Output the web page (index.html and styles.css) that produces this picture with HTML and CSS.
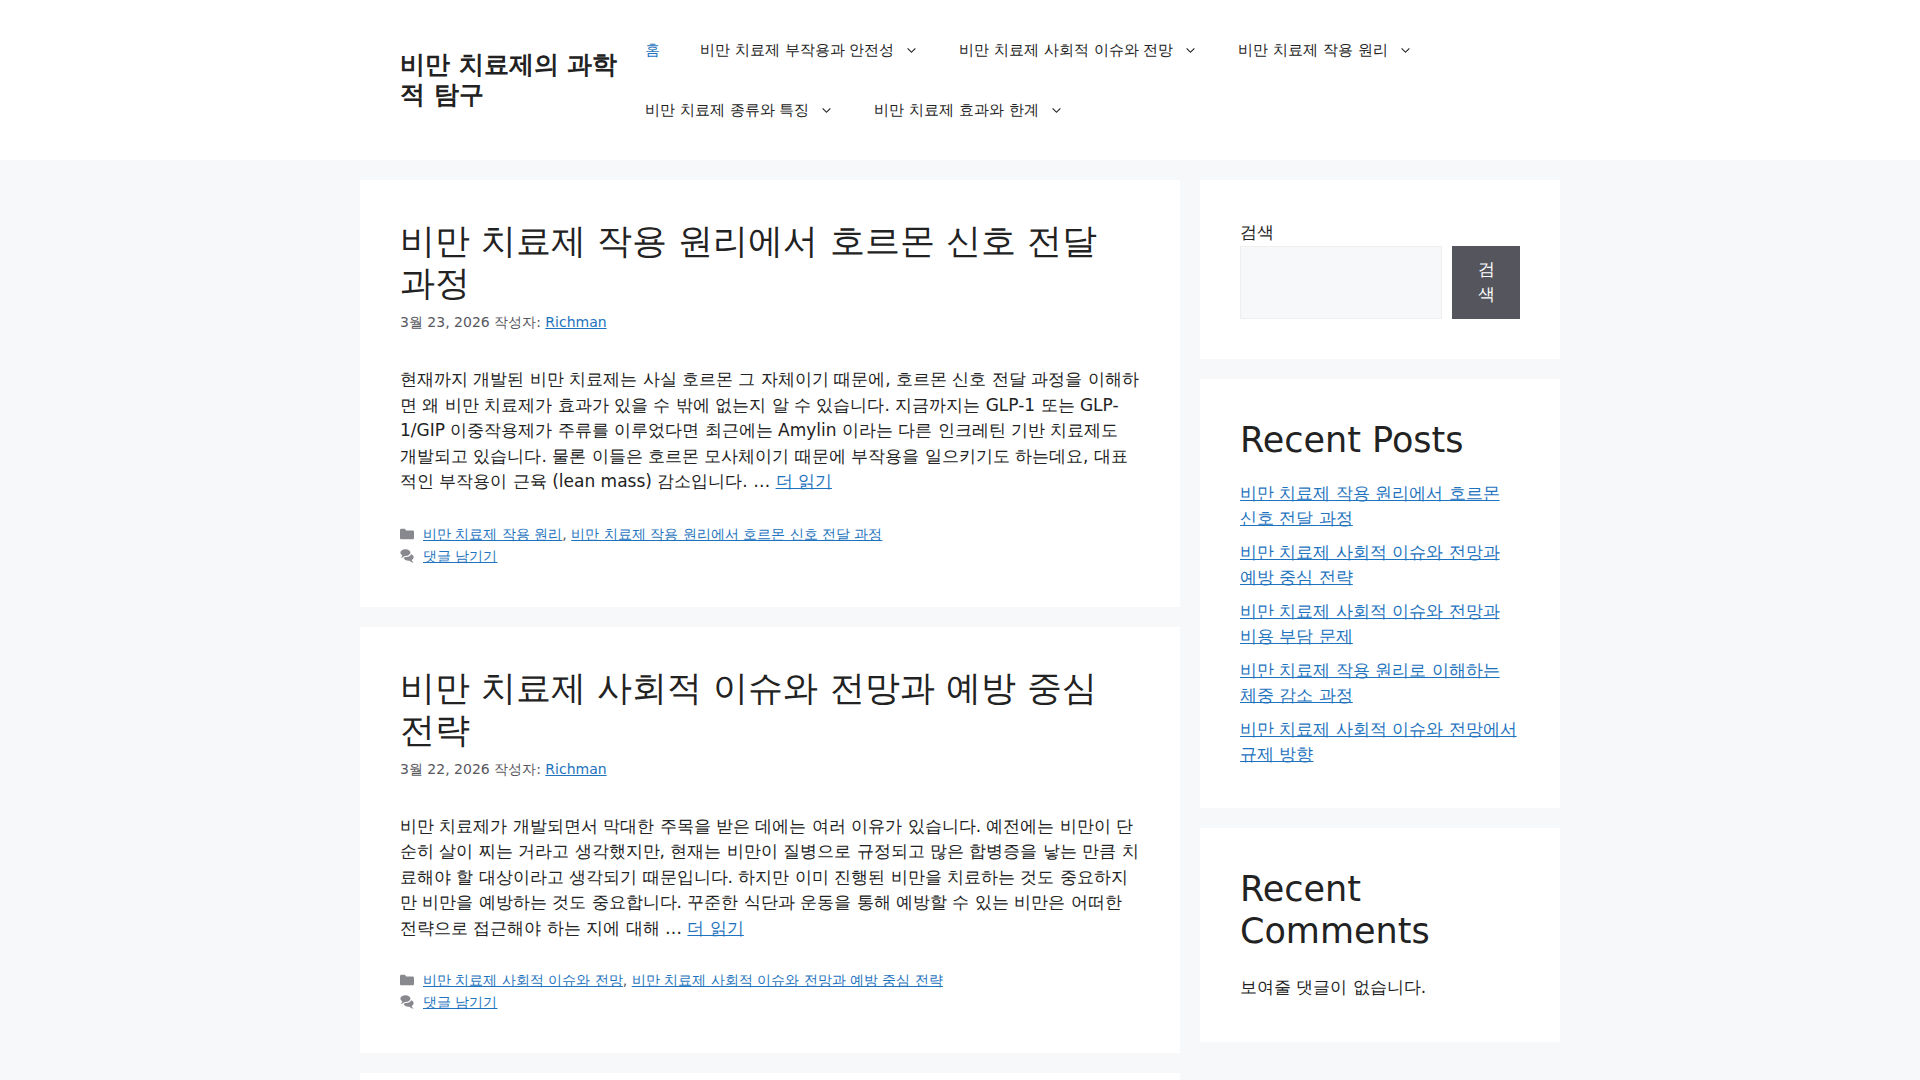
FILE: index.html
```html
<!DOCTYPE html>
<html lang="ko-KR">
<head>
  <meta charset="UTF-8">
  <meta name="viewport" content="width=device-width, initial-scale=1.0">
  <title>비만 치료제의 과학적 탐구</title>
  <link rel="stylesheet" href="styles.css">
</head>
<body>

  <!-- shared icons -->
  <svg class="icon-defs" aria-hidden="true">
    <symbol id="icon-arrow" viewBox="0 0 330 512">
      <path d="M305.913 197.085c0 2.266-1.133 4.815-2.833 6.514L171.087 335.593c-1.7 1.7-4.249 2.832-6.515 2.832s-4.815-1.133-6.515-2.832L26.064 203.599c-1.7-1.7-2.832-4.248-2.832-6.514s1.132-4.816 2.832-6.515l14.162-14.163c1.7-1.699 3.966-2.832 6.515-2.832 2.266 0 4.815 1.133 6.515 2.832l111.316 111.317 111.316-111.317c1.7-1.699 4.249-2.832 6.515-2.832s4.815 1.133 6.515 2.832l14.162 14.163c1.7 1.7 2.833 4.249 2.833 6.515z"/>
    </symbol>
    <symbol id="icon-folder" viewBox="0 0 512 512">
      <path d="M0 112c0-26.51 21.49-48 48-48h110.014a48 48 0 0143.592 27.907l12.349 26.791A16 16 0 00228.486 128H464c26.51 0 48 21.49 48 48v224c0 26.51-21.49 48-48 48H48c-26.51 0-48-21.49-48-48V112z"/>
    </symbol>
    <symbol id="icon-comments" viewBox="0 0 512 512">
      <path d="M132.838 329.973a435.298 435.298 0 0016.769-9.004c13.363-7.574 26.587-16.142 37.419-25.507 7.544.597 15.27.925 23.098.925 54.905 0 105.634-15.311 143.285-41.28 23.728-16.365 43.115-37.692 54.155-62.645 54.739 22.205 91.498 63.272 91.498 110.286 0 42.186-29.558 79.498-75.09 102.828 23.46 49.216 75.09 101.709 75.09 101.709s-115.837-38.35-154.424-78.46c-9.956 1.12-20.297 1.758-30.793 1.758-88.727 0-162.927-43.071-181.007-100.61z"/>
      <path d="M383.371 132.502c0 70.603-82.961 127.787-185.216 127.787-10.496 0-20.837-.639-30.793-1.757-38.587 40.093-154.424 78.42-154.424 78.42s51.63-52.472 75.09-101.67c-45.532-23.321-75.09-60.619-75.09-102.79C12.938 61.9 95.9 4.716 198.155 4.716 300.41 4.715 383.37 61.9 383.37 132.502z"/>
    </symbol>
  </svg>

  <header class="site-header">
    <div class="inside-header">
      <p class="site-title"><a href="#">비만 치료제의 과학적 탐구</a></p>
      <nav class="main-nav">
        <ul>
          <li class="current"><a href="#">홈</a></li>
          <li><a href="#">비만 치료제 부작용과 안전성<svg class="arrow"><use href="#icon-arrow"/></svg></a></li>
          <li><a href="#">비만 치료제 사회적 이슈와 전망<svg class="arrow"><use href="#icon-arrow"/></svg></a></li>
          <li><a href="#">비만 치료제 작용 원리<svg class="arrow"><use href="#icon-arrow"/></svg></a></li>
          <li><a href="#">비만 치료제 종류와 특징<svg class="arrow"><use href="#icon-arrow"/></svg></a></li>
          <li><a href="#">비만 치료제 효과와 한계<svg class="arrow"><use href="#icon-arrow"/></svg></a></li>
        </ul>
      </nav>
    </div>
  </header>

  <div class="site-content">
    <main class="posts">
      <article class="box">
        <h2 class="entry-title"><a href="#">비만 치료제 작용 원리에서 호르몬 신호 전달 과정</a></h2>
        <div class="entry-meta">3월 23, 2026 작성자: <a href="#">Richman</a></div>
        <p class="entry-summary">현재까지 개발된 비만 치료제는 사실 호르몬 그 자체이기 때문에, 호르몬 신호 전달 과정을 이해하면 왜 비만 치료제가 효과가 있을 수 밖에 없는지 알 수 있습니다. 지금까지는 GLP-1 또는 GLP-1/GIP 이중작용제가 주류를 이루었다면 최근에는 Amylin 이라는 다른 인크레틴 기반 치료제도 개발되고 있습니다. 물론 이들은 호르몬 모사체이기 때문에 부작용을 일으키기도 하는데요, 대표적인 부작용이 근육 (lean mass) 감소입니다. … <a href="#">더 읽기</a></p>
        <footer class="entry-footer">
          <div><svg class="icon"><use href="#icon-folder"/></svg><a href="#">비만 치료제 작용 원리</a>, <a href="#">비만 치료제 작용 원리에서 호르몬 신호 전달 과정</a></div>
          <div><svg class="icon"><use href="#icon-comments"/></svg><a href="#">댓글 남기기</a></div>
        </footer>
      </article>

      <article class="box">
        <h2 class="entry-title"><a href="#">비만 치료제 사회적 이슈와 전망과 예방 중심 전략</a></h2>
        <div class="entry-meta">3월 22, 2026 작성자: <a href="#">Richman</a></div>
        <p class="entry-summary">비만 치료제가 개발되면서 막대한 주목을 받은 데에는 여러 이유가 있습니다. 예전에는 비만이 단순히 살이 찌는 거라고 생각했지만, 현재는 비만이 질병으로 규정되고 많은 합병증을 낳는 만큼 치료해야 할 대상이라고 생각되기 때문입니다. 하지만 이미 진행된 비만을 치료하는 것도 중요하지만 비만을 예방하는 것도 중요합니다. 꾸준한 식단과 운동을 통해 예방할 수 있는 비만은 어떠한 전략으로 접근해야 하는 지에 대해 … <a href="#">더 읽기</a></p>
        <footer class="entry-footer">
          <div><svg class="icon"><use href="#icon-folder"/></svg><a href="#">비만 치료제 사회적 이슈와 전망</a>, <a href="#">비만 치료제 사회적 이슈와 전망과 예방 중심 전략</a></div>
          <div><svg class="icon"><use href="#icon-comments"/></svg><a href="#">댓글 남기기</a></div>
        </footer>
      </article>

      <article class="box"></article>
    </main>

    <aside class="sidebar">
      <section class="box">
        <form class="search" role="search">
          <label for="search">검색</label>
          <div class="search-row">
            <input type="search" id="search">
            <button type="submit">검색</button>
          </div>
        </form>
      </section>

      <section class="box">
        <h2>Recent Posts</h2>
        <ul class="recent-posts">
          <li><a href="#">비만 치료제 작용 원리에서 호르몬 신호 전달 과정</a></li>
          <li><a href="#">비만 치료제 사회적 이슈와 전망과 예방 중심 전략</a></li>
          <li><a href="#">비만 치료제 사회적 이슈와 전망과 비용 부담 문제</a></li>
          <li><a href="#">비만 치료제 작용 원리로 이해하는 체중 감소 과정</a></li>
          <li><a href="#">비만 치료제 사회적 이슈와 전망에서 규제 방향</a></li>
        </ul>
      </section>

      <section class="box">
        <h2>Recent Comments</h2>
        <p class="no-comments">보여줄 댓글이 없습니다.</p>
      </section>
    </aside>
  </div>

</body>
</html>
```
FILE: styles.css
```css
* {
  box-sizing: border-box;
}

body {
  margin: 0;
  background-color: #f7f8f9;
  color: #222;
  font-family: "DejaVu Sans", system-ui, sans-serif;
  font-size: 17px;
  line-height: 1.5;
}

h2, p, ul {
  margin: 0;
  padding: 0;
}

ul {
  list-style: none;
}

a {
  color: #1e73be;
}

h2 {
  margin-bottom: 20px;
  font-size: 35px;
  font-weight: 400;
  line-height: 1.2;
}

.icon-defs {
  display: none;
}

/* header */
.site-header {
  background-color: #fff;
}

.inside-header {
  display: flex;
  align-items: center;
  max-width: 1200px;
  margin: 0 auto;
  padding: 20px 40px;
}

.site-title {
  flex: 0 1 225px;
  font-size: 25px;
  font-weight: 700;
  line-height: 1.2;
}

.site-title a {
  color: #222;
  text-decoration: none;
}

.main-nav {
  flex: 1;
}

.main-nav ul {
  display: flex;
  flex-wrap: wrap;
}

.main-nav a {
  display: flex;
  align-items: center;
  padding: 0 20px;
  color: #222;
  font-size: 15px;
  line-height: 60px;
  text-decoration: none;
}

.main-nav .current a {
  color: #1e73be;
}

.arrow {
  width: 15px;
  height: 15px;
  margin-left: 10px;
  fill: currentColor;
}

/* layout */
.site-content {
  display: grid;
  grid-template-columns: minmax(0, 1fr) 360px;
  gap: 20px;
  align-items: start;
  max-width: 1200px;
  margin: 20px auto;
}

.posts, .sidebar {
  display: grid;
  grid-template-columns: minmax(0, 1fr);
  gap: 20px;
}

.box {
  padding: 40px;
  background-color: #fff;
}

/* posts */
.entry-title {
  margin-bottom: 0;
}

.entry-title a {
  color: #222;
  text-decoration: none;
}

.entry-meta, .entry-footer {
  color: #575760;
  font-size: 14px;
  line-height: 22px;
}

.entry-meta {
  margin-top: 7px;
}

.entry-summary {
  margin-top: 34px;
}

.entry-footer {
  margin-top: 28px;
}

.icon {
  width: 14px;
  height: 14px;
  margin-right: 9px;
  vertical-align: -2px;
  fill: currentColor;
  opacity: 0.7;
}

/* sidebar */
.search label {
  display: block;
}

.search-row {
  display: flex;
  gap: 10px;
}

.search input {
  flex: 1;
  min-width: 0;
  padding: 10px 15px;
  border: 1px solid #eee;
  border-radius: 0;
  background-color: #f7f8f9;
  font: inherit;
}

.search button {
  width: 68px;
  padding: 11px 20px;
  border: none;
  background-color: #55555e;
  color: #fff;
  font: inherit;
  cursor: pointer;
}

.recent-posts li + li {
  margin-top: 8px;
}

.no-comments {
  line-height: 30px;
}
```
